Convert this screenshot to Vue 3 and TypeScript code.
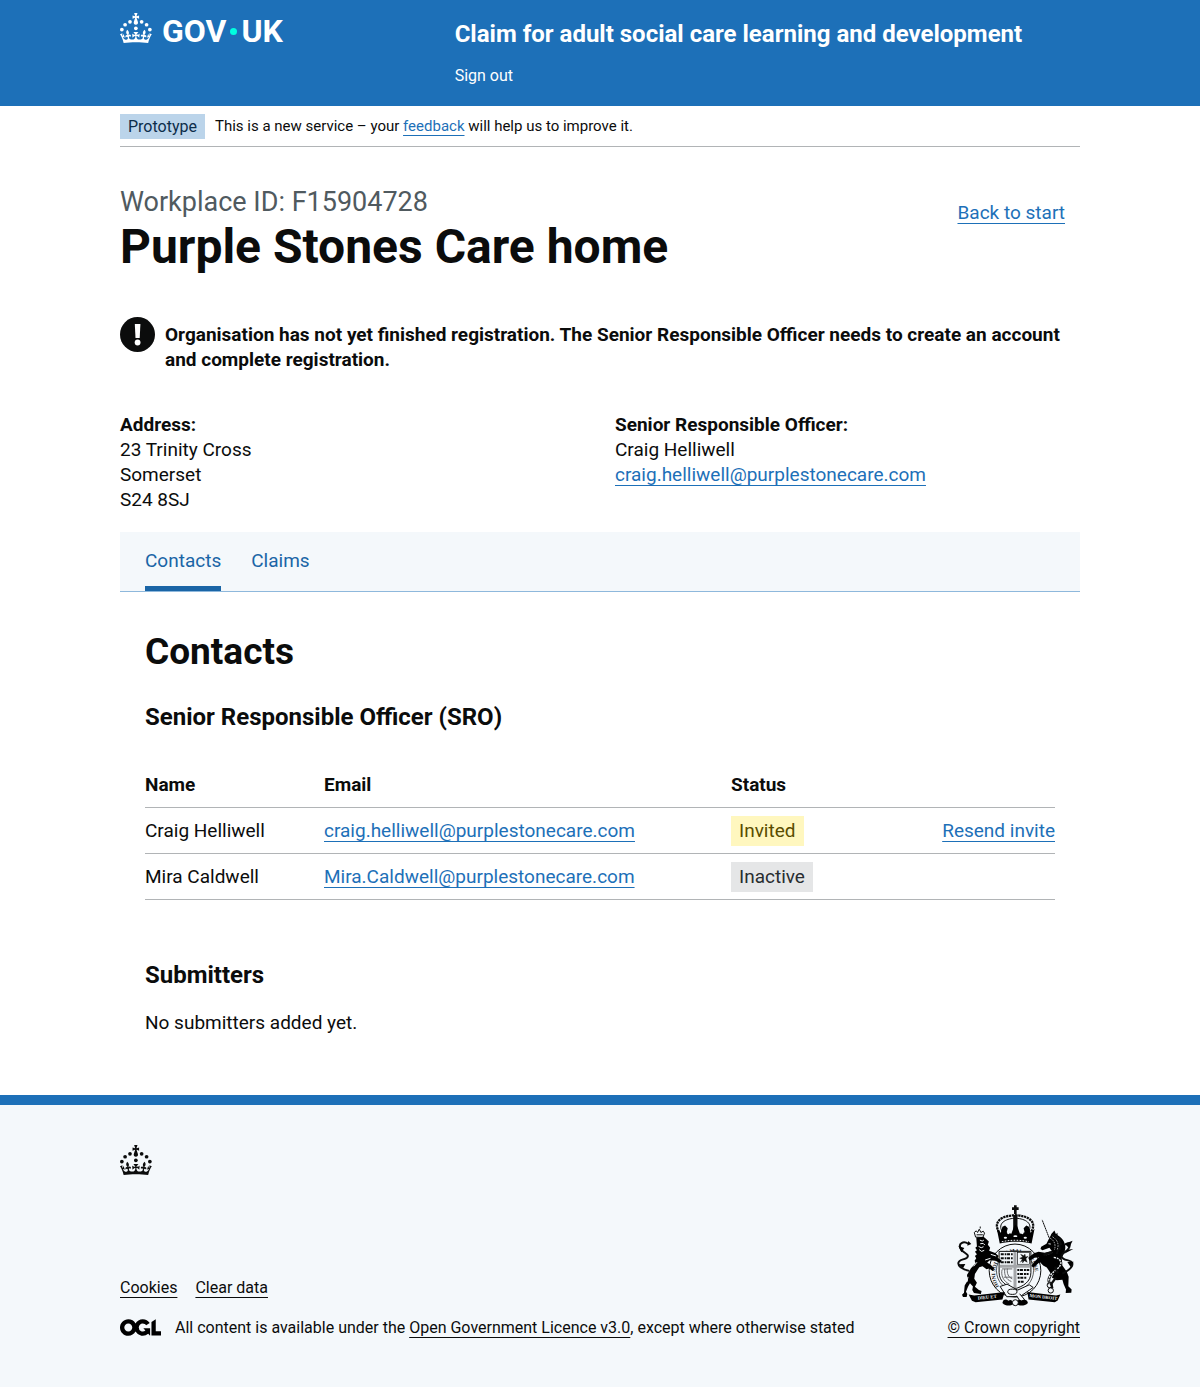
<script setup lang="ts">
interface Contact {
  name: string
  email: string
  status: 'Invited' | 'Inactive'
  canResend: boolean
}

const organisation = {
  workplaceId: 'F15904728',
  name: 'Purple Stones Care home',
  address: ['23 Trinity Cross', 'Somerset', 'S24 8SJ'],
  officer: { name: 'Craig Helliwell', email: 'craig.helliwell@purplestonecare.com' },
}

const tabs = [
  { label: 'Contacts', current: true },
  { label: 'Claims', current: false },
]

const contacts: Contact[] = [
  { name: 'Craig Helliwell', email: 'craig.helliwell@purplestonecare.com', status: 'Invited', canResend: true },
  { name: 'Mira Caldwell', email: 'Mira.Caldwell@purplestonecare.com', status: 'Inactive', canResend: false },
]

const crownPath =
  'M33.1,9.8c.2-.1.3-.3.5-.5l4.6,2.4v-6.8l-4.6,1.5c-.1-.2-.3-.3-.5-.5l1.9-5.9h-6.7l1.9,5.9c-.2.1-.3.3-.5.5l-4.6-1.5v6.8l4.6-2.4c.1.2.3.3.5.5l-2.6,8c-.9,2.8,1.2,5.7,4.1,5.7h0c3,0,5.1-2.9,4.1-5.7l-2.6-8ZM37,37.9s-3.4,3.8-4.1,6.1c2.2,0,4.2-.5,6.4-2.8l-.7,8.5c-2-2.8-4.4-4.1-5.7-3.8.1,3.1.5,6.7,5.8,7.2,3.7.3,6.7-1.5,7-3.8.4-2.6-2-4.3-3.7-1.6-1.4-4.5,2.4-6.1,4.9-3.2-1.9-4.5-1.8-7.7,2.4-10.9,3,4,2.6,7.3-1.2,11.1,2.4-1.3,6.2,0,4,4.6-1.2-2.8-3.7-2.2-4.2.2-.3,1.7.7,3.7,3,4.2,1.9.3,4.7-.9,7-5.9-1.3,0-2.4.7-3.9,1.7l2.4-8c.6,2.3,1.4,3.7,2.2,4.5.6-1.6.5-2.8,0-5.3l5,1.8c-2.6,3.6-5.2,8.7-7.3,17.5-7.4-1.1-15.7-1.7-24.5-1.7h0c-8.8,0-17.1.6-24.5,1.7-2.1-8.9-4.7-13.9-7.3-17.5l5-1.8c-.5,2.5-.6,3.7,0,5.3.8-.8,1.6-2.3,2.2-4.5l2.4,8c-1.5-1-2.6-1.7-3.9-1.7,2.3,5,5.2,6.2,7,5.9,2.3-.4,3.3-2.4,3-4.2-.5-2.4-3-3.1-4.2-.2-2.2-4.6,1.6-6,4-4.6-3.7-3.7-4.2-7.1-1.2-11.1,4.2,3.2,4.3,6.4,2.4,10.9,2.5-2.8,6.3-1.3,4.9,3.2-1.8-2.7-4.1-1-3.7,1.6.3,2.3,3.3,4.1,7,3.8,5.4-.5,5.7-4.2,5.8-7.2-1.3-.2-3.7,1-5.7,3.8l-.7-8.5c2.2,2.3,4.2,2.7,6.4,2.8-.7-2.3-4.1-6.1-4.1-6.1h10.6Z'

const crownBeads = [
  [20, 17.6],
  [10.2, 23.5],
  [3.7, 33.2],
  [31.7, 30.6],
  [43.3, 17.6],
  [53.2, 23.5],
  [59.7, 33.2],
]
</script>

<template>
  <div class="page">
    <header class="header">
      <div class="container header-grid">
        <a class="logo" href="#" aria-label="GOV.UK">
          <svg class="crown" viewBox="0 0 64 60" aria-hidden="true">
            <circle v-for="[x, y] in crownBeads" :key="`${x}-${y}`" :cx="x" :cy="y" r="3.7" />
            <path :d="crownPath" />
          </svg>
          <span class="wordmark"><span>GOV</span><i class="dot"></i><span>UK</span></span>
        </a>
        <div>
          <a class="service-name" href="#">Claim for adult social care learning and development</a>
          <nav><a class="sign-out" href="#">Sign out</a></nav>
        </div>
      </div>
    </header>

    <div class="container">
      <div class="phase-banner">
        <strong class="phase-tag">Prototype</strong>
        <span class="phase-text">This is a new service – your <a class="link" href="#">feedback</a> will help us to improve it.</span>
      </div>

      <main>
        <div class="title-row">
          <div>
            <span class="caption">Workplace ID: {{ organisation.workplaceId }}</span>
            <h1>{{ organisation.name }}</h1>
          </div>
          <a class="link back" href="#">Back to start</a>
        </div>

        <div class="warning">
          <svg class="warning-icon" viewBox="0 0 35 35" aria-hidden="true">
            <circle cx="17.5" cy="17.5" r="17.5" fill="#0b0c0c" />
            <path d="M14.8 7h5.6l-.7 14h-4.2z" fill="#fff" />
            <circle cx="17.6" cy="25.5" r="2.9" fill="#fff" />
          </svg>
          <strong>Organisation has not yet finished registration. The Senior Responsible Officer needs to create an account and complete registration.</strong>
        </div>

        <div class="details">
          <div>
            <strong>Address:</strong>
            <div v-for="line in organisation.address" :key="line">{{ line }}</div>
          </div>
          <div>
            <strong>Senior Responsible Officer:</strong>
            <div>{{ organisation.officer.name }}</div>
            <a class="link" href="#">{{ organisation.officer.email }}</a>
          </div>
        </div>

        <nav class="tabs" aria-label="Organisation">
          <a v-for="tab in tabs" :key="tab.label" href="#" class="tab" :class="{ current: tab.current }">{{ tab.label }}</a>
        </nav>

        <section class="panel">
          <h2>Contacts</h2>
          <h3>Senior Responsible Officer (SRO)</h3>
          <table>
            <thead>
              <tr>
                <th class="col-name" scope="col">Name</th>
                <th class="col-email" scope="col">Email</th>
                <th class="col-status" scope="col">Status</th>
                <td></td>
              </tr>
            </thead>
            <tbody>
              <tr v-for="contact in contacts" :key="contact.email">
                <td>{{ contact.name }}</td>
                <td><a class="link" href="#">{{ contact.email }}</a></td>
                <td><strong class="tag" :class="contact.status.toLowerCase()">{{ contact.status }}</strong></td>
                <td class="action"><a v-if="contact.canResend" class="link" href="#">Resend invite</a></td>
              </tr>
            </tbody>
          </table>
          <h3>Submitters</h3>
          <p>No submitters added yet.</p>
        </section>
      </main>
    </div>

    <footer class="footer">
      <div class="container">
        <svg class="crown" viewBox="0 0 64 60" aria-hidden="true">
          <circle v-for="[x, y] in crownBeads" :key="`${x}-${y}`" :cx="x" :cy="y" r="3.7" />
          <path :d="crownPath" />
        </svg>
        <div class="footer-row">
          <div>
            <ul class="footer-links">
              <li><a href="#">Cookies</a></li>
              <li><a href="#">Clear data</a></li>
            </ul>
            <div class="licence">
              <svg class="ogl" viewBox="0 0 483.2 195.7" aria-hidden="true">
                <path d="M421.5 142.8V.1l-50.7 32.3v161.1h112.4v-50.7zm-122.3-9.6A47.12 47.12 0 0 1 221 97.8c0-26 21.1-47.1 47.1-47.1 16.7 0 31.4 8.7 39.7 21.8l42.7-27.2A97.63 97.63 0 0 0 268.1 0c-36.5 0-68.3 20.1-85.1 49.7A98 98 0 0 0 97.8 0C43.9 0 0 43.9 0 97.8s43.9 97.8 97.8 97.8c36.5 0 68.3-20.1 85.1-49.7a97.76 97.76 0 0 0 149.6 25.4l19.4 22.2h3v-87.8h-80l24.3 27.5zM97.8 145c-26 0-47.1-21.1-47.1-47.1s21.1-47.1 47.1-47.1 47.1 21.1 47.1 47.1S123.8 145 97.8 145" />
              </svg>
              <span>All content is available under the <a href="#">Open Government Licence v3.0</a>, except where otherwise stated</span>
            </div>
          </div>
          <a class="copyright" href="#">
            <svg class="arms" viewBox="36 28 351 308" aria-hidden="true">
              <!-- crown -->
              <g fill="none" stroke="#0b0c0c">
                <path d="M211 29v26M201 39h20" stroke-width="8" />
                <path d="M211 58v50" stroke-width="13" />
                <path d="M162 110c-20-32 8-50 48-51c42 1 68 20 48 51" stroke-width="7" stroke-dasharray="7 2" />
                <path d="M171 108c-14-25 10-38 37-40M251 108c14-25-10-38-37-40" stroke-width="3" />
              </g>
              <path d="M155 100l12 12 5-18 8-4 8 8-3 12 14 5 8-22 5-5 5 5 8 22 14-5-3-12 8-8 8 4 5 18 12-12-9 44c-28-7-68-7-96 0z" />
              <g fill="#f4f8fb">
                <circle cx="190" cy="112" r="4" /><circle cx="232" cy="112" r="4" />
                <ellipse cx="181" cy="127" rx="5" ry="3" /><ellipse cx="211" cy="122" rx="6" ry="3" /><ellipse cx="241" cy="127" rx="5" ry="3" />
              </g>
              <path d="M170 139c27-6 55-6 82 0" fill="none" stroke="#f4f8fb" stroke-width="3" stroke-dasharray="5 4" />

              <!-- garter and shield -->
              <ellipse cx="210" cy="226" rx="78" ry="80" fill="#f4f8fb" stroke="#0b0c0c" stroke-width="3" />
              <ellipse cx="210" cy="226" rx="56" ry="60" fill="none" stroke="#0b0c0c" stroke-width="2" />
              <path id="garter" d="M162 274A60 64 0 1 1 258 274" fill="none" />
              <text class="motto" font-size="16" fill="#0b0c0c"><textPath href="#garter">HONI SOIT QUI MAL Y PENSE</textPath></text>
              <path d="M162 168h96v64c0 28-24 42-48 49c-24-7-48-21-48-49z" fill="#f4f8fb" stroke="#0b0c0c" stroke-width="3" />
              <g fill="none" stroke="#0b0c0c">
                <path d="M167 177h36M167 189h36M167 201h36" stroke-width="6" stroke-dasharray="9 3 5 2" />
                <path d="M217 224h36M217 236h34M218 248h28M219 260h18" stroke-width="6" stroke-dasharray="6 2 9 3" />
                <rect x="218" y="171" width="36" height="36" stroke-width="2" />
                <path d="M226 201l6-9-8-3 9-4-6-8 10 4 3-5 2 9 8-2-7 7 4 11-9-5-5 7-1-7z" fill="#0b0c0c" stroke-width="1" />
                <path d="M171 223c-4 17 3 35 22 44M179 221c-2 19 4 32 20 38M187 220c-2 15 3 26 15 31M171 221h31M176 246h26" stroke="#68696b" stroke-width="3" />
              </g>
              <path d="M210 170v110M164 213h92" stroke="#a4a6a9" stroke-width="9" />

              <!-- lion -->
              <g>
                <path d="M91 125l-4-14 6-5 4 5 5-10 5 10 7-4 4 6-5 13z" fill="#f4f8fb" stroke="#0b0c0c" stroke-width="3" />
                <path d="M105 99v-6M94 118h19" stroke="#0b0c0c" stroke-width="3" />
                <path d="M93 126l22-2 8 7 8 7-3 10 7 9-3 9 18 7 10 8-2 6 12 9-5 7-14-7-17-1-8 7 12 8 9 10-4 7-11-7-8 2-12-9-10 3-13 20-2 15 8 12-6 12 12 10 8 3-2 9-21-3-5-9 2-11-9-10-6 11-6 15 4 7-2 9H53l-3-7 6-6 2-22 9-15-2-17 12-20 14-15-3-8 5-7-4-7 6-5-6-8 6-4-5-8 5-4z" />
                <path d="M72 227C44 220 38 212 39 203C41 191 57 194 65 187C75 177 54 173 47 162C36 143 55 136 69 145" fill="none" stroke="#0b0c0c" stroke-width="6" />
                <path d="M57 158l-18-6 9 19zM60 206l-21 1 14 12zM69 137l9 9-12 5z" />
                <path d="M104 134l7 3 5-3M105 145l9-1 5 5M100 153l8 4 7-3M102 163l7 5 8-3M137 177l16 5M120 194l16-5M85 213l10-12M68 245l-3 15" fill="none" stroke="#f4f8fb" stroke-width="3" />
              </g>

              <!-- unicorn -->
              <g>
                <path d="M313 127L292 73" stroke="#0b0c0c" stroke-width="3" stroke-dasharray="6 1" />
                <path d="M311 133l-6 12-16 9-2 7 6 4 21-8 7 10-21 5-19-3-14 5-17 13 4 9 15-9 13-1-12 12-11 14 7 5 19-17 10 11 11 6 11 16 10 3-6 11 15 8 17-1 4 13 7 16-1 11 17-1 1-10-10-10 1-28-6-16-13-18-2-23 9-20c7-21-5-42-26-51l-5-12-8 9z" />
                <path d="M320 117l11 5 5-5 1 10 10 5-3 5 5 9-5 3 2 12-6 2-4 13" fill="none" stroke="#0b0c0c" stroke-width="5" />
                <path d="M316 128c13 7 18 20 13 36M323 124c18 10 20 26 14 40" fill="none" stroke="#f4f8fb" stroke-width="2" stroke-dasharray="5 3" />
                <path d="M311 145l7 1M305 178l17-6" stroke="#f4f8fb" stroke-width="3" />
                <path d="M296 178l26-7M327 186c26 4 28 22 8 37s-28 29-20 43" fill="none" stroke="#0b0c0c" stroke-width="8" />
                <path d="M327 186c26 4 28 22 8 37s-28 29-20 43" fill="none" stroke="#f4f8fb" stroke-width="4" stroke-dasharray="6 3" />
                <path d="M331 214l8 20M334 247l-15 20 4 12" fill="none" stroke="#0b0c0c" stroke-width="7" />
                <circle cx="315" cy="270" r="8" fill="none" stroke="#0b0c0c" stroke-width="3" />
                <circle cx="318" cy="286" r="8" fill="none" stroke="#0b0c0c" stroke-width="3" />
                <path d="M353 235C374 225 386 216 383 204C380 191 355 198 351 184C348 170 374 169 375 151C376 140 367 143 361 148" fill="none" stroke="#0b0c0c" stroke-width="6" />
                <path d="M384 136l-24 9 13 13zM386 161l-18 2-9 12zM387 199l-19 1 10 15z" />
              </g>

              <!-- buckle and motto scroll -->
              <path d="M165 274l21-7 32 18 35-16 12 8-39 27-41 1z" fill="#f4f8fb" stroke="#0b0c0c" stroke-width="3" />
              <path d="M188 290a14 8 0 1 0 28 0a14 8 0 1 0-28 0M224 296l15 18-13 6-11-18" fill="#f4f8fb" stroke="#0b0c0c" stroke-width="3" />
              <path d="M70 298l17 3 92-10-7 22-81 9-11-5zM347 298l-13 3-87-10 4 22 79 9 9-6z" />
              <g class="motto" fill="#f4f8fb" font-size="14">
                <text transform="translate(98 314) rotate(-6)">DIEU ET</text>
                <text transform="translate(254 306) rotate(6)">MON DROIT</text>
              </g>
              <path d="M172 324c2-14 12-12 18-7 7-6 15 0 14 11-8 6-24 5-32-4zM216 328c-1-13 7-17 14-11 7-5 17-5 19 7-8 9-25 10-33 4z" />
              <circle cx="211" cy="323" r="9" fill="#f4f8fb" stroke="#0b0c0c" stroke-width="3" />
            </svg>
            <span>© Crown copyright</span>
          </a>
        </div>
      </div>
    </footer>
  </div>
</template>

<style>
body {
  margin: 0;
}
</style>

<style scoped>
.page {
  font-family: Roboto, "Liberation Sans", sans-serif;
  font-size: 19px;
  line-height: 25px;
  color: #0b0c0c;
  background: #fff;
}

.container {
  max-width: 960px;
  margin: 0 auto;
}

a {
  color: inherit;
  text-decoration-thickness: 1px;
  text-underline-offset: 4px;
}

.link {
  color: #1d70b8;
}

.header {
  color: #fff;
  background: #1d70b8;
}

.header a {
  text-decoration: none;
}

.header-grid {
  display: grid;
  grid-template-columns: 1fr 2fr;
  gap: 22px;
  padding: 13px 0 18px;
}

.logo {
  display: flex;
  align-items: flex-start;
  gap: 10px;
}

.crown {
  display: block;
  width: 32px;
  height: 30px;
  fill: currentColor;
}

.wordmark {
  display: flex;
  align-items: center;
  gap: 4px;
  font-size: 32px;
  font-weight: 700;
  line-height: 36px;
}

.dot {
  width: 7px;
  height: 7px;
  border-radius: 50%;
  background: #00ffe0;
}

.service-name {
  display: block;
  margin-top: 6px;
  font-size: 24px;
  font-weight: 700;
  line-height: 30px;
}

.sign-out {
  display: block;
  margin-top: 14px;
  font-size: 16px;
}

.phase-banner {
  display: flex;
  align-items: center;
  gap: 10px;
  padding: 8px 0 7px;
  border-bottom: 1px solid #b1b4b6;
}

.phase-tag {
  padding: 0 8px;
  font-size: 16px;
  font-weight: 400;
  color: #0c2d4a;
  background: #bbd4ea;
}

.phase-text {
  font-size: 15px;
}

.title-row {
  display: flex;
  align-items: center;
  justify-content: space-between;
  padding: 40px 15px 0 0;
}

.caption {
  display: block;
  font-size: 27px;
  line-height: 30px;
  color: #505a5f;
}

h1 {
  margin: 5px 0 0;
  font-size: 48px;
  line-height: 50px;
}

.back {
  margin-bottom: 34px;
}

.warning {
  display: flex;
  gap: 10px;
  margin-top: 45px;
}

.warning strong {
  padding-top: 5px;
}

.warning-icon {
  flex: none;
  width: 35px;
  height: 35px;
}

.details {
  display: grid;
  grid-template-columns: 1fr 1fr;
  gap: 30px;
  margin: 40px 0 20px;
}

.tabs {
  display: flex;
  gap: 30px;
  padding: 0 25px;
  border-bottom: 1px solid #8eb8dc;
  background: #f4f8fb;
}

.tab {
  padding: 16px 0 13px;
  border-bottom: 5px solid transparent;
  color: #1a65a6;
  text-decoration: none;
}

.tab.current {
  border-color: #1a65a6;
}

.panel {
  padding: 40px 25px 60px;
}

h2 {
  margin: 0 0 30px;
  font-size: 37px;
  line-height: 40px;
}

h3 {
  margin: 0;
  font-size: 24px;
  line-height: 30px;
}

table {
  width: 100%;
  margin: 30px 0 60px;
  border-collapse: collapse;
}

th,
td {
  padding: 10px 0;
  border-bottom: 1px solid #b1b4b6;
  text-align: left;
}

.col-name {
  width: 179px;
}

.col-email {
  width: 407px;
}

.col-status {
  width: 160px;
}

td.action {
  text-align: right;
}

.tag {
  display: inline-block;
  margin: -3px 0;
  padding: 2px 8px 3px;
  font-weight: 400;
}

.invited {
  color: #594d00;
  background: #fff7bf;
}

.inactive {
  color: #282d30;
  background: #e5e6e7;
}

p {
  margin: 20px 0 0;
}

.footer {
  padding: 40px 0 47px;
  border-top: 10px solid #1d70b8;
  background: #f4f8fb;
  font-size: 16px;
}

.footer-row {
  display: flex;
  align-items: flex-end;
  justify-content: space-between;
  margin-top: 30px;
}

.footer-links {
  display: flex;
  gap: 18px;
  margin: 0 0 15px;
  padding: 0;
  list-style: none;
}

.licence {
  display: flex;
  align-items: center;
  gap: 14px;
}

.ogl {
  width: 41px;
  height: 17px;
}

.copyright {
  display: flex;
  flex-direction: column;
  align-items: flex-end;
  gap: 8px;
  text-decoration: none;
}

.copyright span {
  text-decoration: underline;
  text-decoration-thickness: 1px;
  text-underline-offset: 4px;
}

.arms {
  width: 117px;
  height: 102px;
  margin-right: 6px;
}

.motto {
  font-family: "Liberation Serif", serif;
  font-weight: 700;
}
</style>
